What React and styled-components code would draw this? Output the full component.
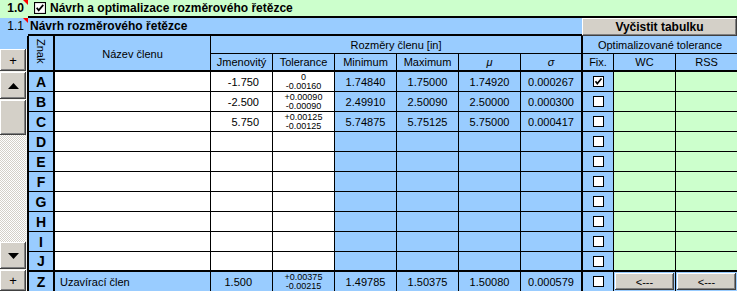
import styled, { createGlobalStyle } from "styled-components";

const BLUE = "#99ccff";
const GREEN = "#ccffcc";
const GRAY = "#d4d0c8";

const GlobalStyle = createGlobalStyle`
  html, body { margin: 0; padding: 0; background: #fff; }
  body { font-family: "Liberation Sans", Arial, sans-serif; }
`;

const bevel = `
  background: ${GRAY};
  box-shadow: inset -1px -1px #404040, inset 1px 1px #ffffff, inset -2px -2px #808080;
`;

const members = [
  { z: "A", nom: "-1.750", tol: ["0", "-0.00160"], min: "1.74840", max: "1.75000", mu: "1.74920", sd: "0.000267", fix: true },
  { z: "B", nom: "-2.500", tol: ["+0.00090", "-0.00090"], min: "2.49910", max: "2.50090", mu: "2.50000", sd: "0.000300" },
  { z: "C", nom: "5.750", tol: ["+0.00125", "-0.00125"], min: "5.74875", max: "5.75125", mu: "5.75000", sd: "0.000417" },
  { z: "D" }, { z: "E" }, { z: "F" }, { z: "G" }, { z: "H" }, { z: "I" }, { z: "J" },
];

const Page = styled.div`
  width: 737px;
  height: 291px;
  overflow: hidden;
  display: flex;
  flex-direction: column;
  font-size: 11px;
  color: #000;
`;

const BandRow = styled.div`
  display: flex;
  height: 18px;
  flex-shrink: 0;
  background: ${(p) => p.$bg};
`;

const Gutter = styled.div`
  position: relative;
  width: 28px;
  flex-shrink: 0;
  box-sizing: border-box;
  display: flex;
  align-items: flex-start;
  justify-content: flex-end;
  padding: 1px 4px 0 0;
  font-size: 12px;
  font-weight: ${(p) => (p.$bold ? 700 : 400)};
`;

const RedMark = styled.span`
  position: absolute;
  top: 0;
  right: 0;
  width: 0;
  height: 0;
  border-top: 5px solid #ff0000;
  border-left: 5px solid transparent;
`;

const BandTitle = styled.div`
  flex: 1;
  display: flex;
  align-items: flex-start;
  gap: 4px;
  padding: 1px 0 0 ${(p) => p.$pad}px;
  border-bottom: 2px solid #000;
  font-size: 12px;
  font-weight: 700;
`;

const BoxSlot = styled.span`
  margin-top: 1px;
  display: flex;
`;

const ClearButton = styled.div`
  width: 155px;
  flex-shrink: 0;
  ${bevel}
  display: flex;
  align-items: center;
  justify-content: center;
  font-size: 12px;
  font-weight: 700;
`;

const Body = styled.div`
  display: flex;
  flex: 1;
  min-height: 0;
`;

const Rail = styled.div`
  width: 27px;
  flex-shrink: 0;
  display: flex;
  flex-direction: column;
  background: #f4f3ef;
`;

const RailBlue = styled.div`
  height: 13px;
  flex-shrink: 0;
  background: ${BLUE};
`;

const RailButton = styled.div`
  width: 26px;
  height: ${(p) => p.$h}px;
  flex-shrink: 0;
  ${bevel}
  display: flex;
  align-items: center;
  justify-content: center;
  font-size: 13px;
`;

const RailGap = styled.div`
  height: 1px;
  flex-shrink: 0;
`;

const Track = styled.div`
  flex: 1;
  width: 26px;
  background: repeating-conic-gradient(${GRAY} 0 25%, #ffffff 0 50%) 0 0 / 2px 2px;
`;

const Sheet = styled.div`
  display: grid;
  grid-template-columns: 26px 156px repeat(6, 62px) 31px 62px 61px;
  grid-template-rows: 18px 18px repeat(11, 20px);
  width: 710px;
  box-sizing: border-box;
  border-left: 2px solid #000;
  flex-shrink: 0;
`;

const Cell = styled.div`
  box-sizing: border-box;
  display: flex;
  align-items: ${(p) => (p.$top ? "flex-start" : "center")};
  justify-content: ${(p) => p.$align || "center"};
  padding: ${(p) => p.$pad || "0"};
  border-right: ${(p) => p.$br ?? 1}px solid #000;
  border-bottom: ${(p) => p.$bb ?? 1}px solid #000;
  background: ${(p) => p.$bg || BLUE};
  grid-column: span ${(p) => p.$cols || 1};
  grid-row: span ${(p) => p.$rows || 1};
  white-space: nowrap;
  overflow: hidden;
  font-style: ${(p) => (p.$italic ? "italic" : "normal")};
`;

const Vertical = styled.span`
  writing-mode: vertical-rl;
  margin-top: 3px;
  align-self: flex-start;
`;

const Letter = styled.span`
  font-size: 14px;
  font-weight: 700;
`;

const TolStack = styled.div`
  display: flex;
  flex-direction: column;
  align-items: center;
  font-size: 9px;
  line-height: 9px;
`;

const CellButton = styled.div`
  flex: 1;
  align-self: stretch;
  ${bevel}
  display: flex;
  align-items: center;
  justify-content: center;
`;

function CheckBox({ checked, size = 11 }) {
  return (
    <svg width={size} height={size} viewBox="0 0 11 11">
      <rect x="0.5" y="0.5" width="10" height="10" fill="#fff" stroke="#000" />
      {checked && (
        <path d="M2.5 5.2 L4.3 7.6 L8.5 2.6" fill="none" stroke="#000" strokeWidth="1.6" />
      )}
    </svg>
  );
}

function Arrow({ down }) {
  return (
    <svg width="11" height="6" viewBox="0 0 11 6">
      <polygon points={down ? "0,0 11,0 5.5,6" : "0,6 11,6 5.5,0"} fill="#000" />
    </svg>
  );
}

function Tol({ lines }) {
  if (!lines) return null;
  return (
    <TolStack>
      <span>{lines[0]}</span>
      <span>{lines[1]}</span>
    </TolStack>
  );
}

export default function App() {
  return (
    <Page>
      <GlobalStyle />
      <BandRow $bg={GREEN}>
        <Gutter $bold>
          1.0
          <RedMark />
        </Gutter>
        <BandTitle $pad={6}>
          <BoxSlot>
            <CheckBox checked size={12} />
          </BoxSlot>
          Návrh a optimalizace rozměrového řetězce
        </BandTitle>
      </BandRow>
      <BandRow $bg={BLUE}>
        <Gutter>
          1.1
          <RedMark />
        </Gutter>
        <BandTitle $pad={2}>Návrh rozměrového řetězce</BandTitle>
        <ClearButton>Vyčistit tabulku</ClearButton>
      </BandRow>
      <Body>
        <Rail>
          <RailBlue />
          <RailButton $h={22}>+</RailButton>
          <RailGap />
          <RailButton $h={27}>
            <Arrow />
          </RailButton>
          <RailGap />
          <RailButton $h={35} />
          <Track />
          <RailButton $h={27}>
            <Arrow down />
          </RailButton>
          <RailGap />
          <RailButton $h={21}>+</RailButton>
        </Rail>
        <Sheet>
          <Cell $rows={2} $br={2} $bb={2}>
            <Vertical>Znak</Vertical>
          </Cell>
          <Cell $rows={2} $bb={2} $top $pad="12px 0 0 0">
            Název členu
          </Cell>
          <Cell $cols={6} $br={2}>Rozměry členu [in]</Cell>
          <Cell $cols={3} $br={0}>Optimalizované tolerance</Cell>
          <Cell $bb={2}>Jmenovitý</Cell>
          <Cell $bb={2}>Tolerance</Cell>
          <Cell $bb={2}>Minimum</Cell>
          <Cell $bb={2}>Maximum</Cell>
          <Cell $bb={2} $italic>μ</Cell>
          <Cell $bb={2} $br={2} $italic>σ</Cell>
          <Cell $bb={2}>Fix.</Cell>
          <Cell $bb={2}>WC</Cell>
          <Cell $bb={2} $br={0}>RSS</Cell>

          {members.map((m, i) => {
            const bb = i === members.length - 1 ? 2 : 1;
            return [
              <Cell key={m.z + "z"} $br={2} $bb={bb}>
                <Letter>{m.z}</Letter>
              </Cell>,
              <Cell key={m.z + "n"} $bb={bb} $bg="#fff" />,
              <Cell key={m.z + "j"} $bb={bb} $bg="#fff" $align="flex-end" $pad="0 13px 0 0">
                {m.nom}
              </Cell>,
              <Cell key={m.z + "t"} $bb={bb} $bg="#fff">
                <Tol lines={m.tol} />
              </Cell>,
              <Cell key={m.z + "mi"} $bb={bb}>{m.min}</Cell>,
              <Cell key={m.z + "ma"} $bb={bb}>{m.max}</Cell>,
              <Cell key={m.z + "mu"} $bb={bb}>{m.mu}</Cell>,
              <Cell key={m.z + "sd"} $bb={bb} $br={2}>{m.sd}</Cell>,
              <Cell key={m.z + "f"} $bb={bb}>
                <CheckBox checked={m.fix} />
              </Cell>,
              <Cell key={m.z + "w"} $bb={bb} $bg={GREEN} />,
              <Cell key={m.z + "r"} $bb={bb} $br={0} $bg={GREEN} />,
            ];
          })}

          <Cell $br={2}>
            <Letter>Z</Letter>
          </Cell>
          <Cell $align="flex-start" $pad="0 0 0 5px">Uzavírací člen</Cell>
          <Cell $align="flex-end" $pad="0 20px 0 0">1.500</Cell>
          <Cell>
            <Tol lines={["+0.00375", "-0.00215"]} />
          </Cell>
          <Cell>1.49785</Cell>
          <Cell>1.50375</Cell>
          <Cell>1.50080</Cell>
          <Cell $br={2}>0.000579</Cell>
          <Cell>
            <CheckBox />
          </Cell>
          <Cell $pad="1px">
            <CellButton>&lt;---</CellButton>
          </Cell>
          <Cell $br={0} $pad="1px">
            <CellButton>&lt;---</CellButton>
          </Cell>
        </Sheet>
      </Body>
    </Page>
  );
}
